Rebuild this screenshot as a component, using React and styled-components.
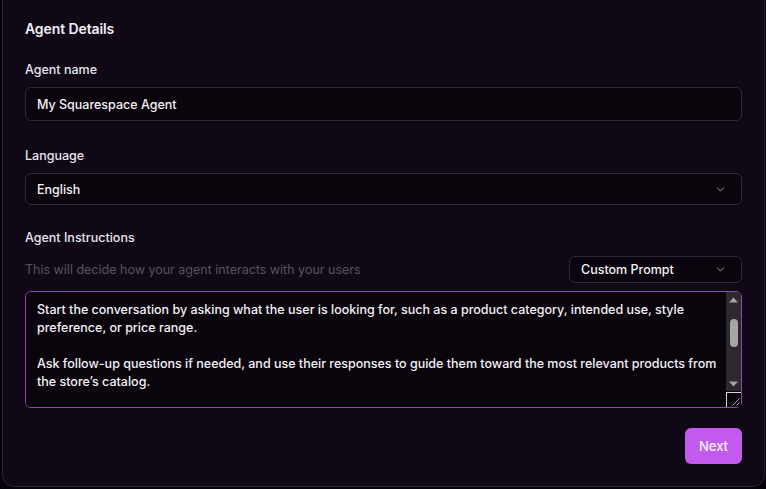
import React, { useEffect, useRef } from "react";
import styled, { createGlobalStyle } from "styled-components";
import { ChevronDown } from "lucide-react";

const GlobalStyle = createGlobalStyle`
  html, body {
    margin: 0;
    padding: 0;
    background: #060308;
    font-family: Inter, "Noto Sans", sans-serif;
    -webkit-font-smoothing: antialiased;
  }
`;

const grip =
  "data:image/svg+xml;utf8,<svg xmlns='http://www.w3.org/2000/svg' width='15' height='15'><path d='M13 6 L6 13 M13 10 L10 13' stroke='%23a8a8a8' stroke-width='1'/></svg>";

const Page = styled.div`
  width: 766px;
  height: 489px;
  overflow: hidden;
  padding: 0 1px 0 2px;
  box-sizing: border-box;
`;

const Card = styled.div`
  margin-top: -12px;
  height: 499px;
  box-sizing: border-box;
  background: #100915;
  border: 1px solid #2c2533;
  border-radius: 12px;
  padding: 31px 22px 22px;
  display: flex;
  flex-direction: column;
`;

const Title = styled.h2`
  margin: 0;
  font-size: 14px;
  line-height: 17px;
  font-weight: 600;
  color: #f2eff5;
  letter-spacing: -0.1px;
`;

const Label = styled.div`
  margin-top: ${(p) => p.$top}px;
  font-size: 12.5px;
  line-height: 16px;
  font-weight: 500;
  color: #e8e4ec;
`;

const Field = styled.div`
  margin-top: 9px;
  height: ${(p) => p.$height}px;
  box-sizing: border-box;
  background: #0a050d;
  border: 1px solid #2f2836;
  border-radius: 6px;
  padding: 0 14px 0 11px;
  display: flex;
  align-items: center;
  justify-content: space-between;
  font-size: 12.5px;
  font-weight: 500;
  color: #f3f0f6;
`;

const Row = styled.div`
  margin-top: 10px;
  display: flex;
  align-items: center;
  justify-content: space-between;
`;

const Help = styled.span`
  font-size: 12.5px;
  color: #58525f;
`;

const PromptSelect = styled.div`
  width: 173px;
  height: 27px;
  box-sizing: border-box;
  background: #0a050d;
  border: 1px solid #2f2836;
  border-radius: 6px;
  padding: 0 14px 0 11px;
  display: flex;
  align-items: center;
  justify-content: space-between;
  font-size: 12.5px;
  font-weight: 500;
  color: #f3f0f6;
`;

const TextBox = styled.div`
  position: relative;
  margin-top: 8px;
  height: 117px;
`;

const Instructions = styled.textarea`
  display: block;
  height: 100%;
  width: 100%;
  box-sizing: border-box;
  resize: vertical;
  background: #0a050d;
  border: 1px solid #8b4bab;
  border-radius: 6px;
  padding: 9px 23px 8px 11px;
  font-family: Inter, "Noto Sans", sans-serif;
  font-size: 12.5px;
  line-height: 17.8px;
  font-weight: 500;
  color: #f3f0f6;
  outline: none;
  overflow-y: scroll;

  &::-webkit-scrollbar {
    width: 0;
  }
  &::-webkit-resizer {
    background: #0a050d url("${grip}") no-repeat center;
    border-left: 1px solid #d8d8d8;
    border-top: 1px solid #d8d8d8;
  }
`;

/* drawn scrollbar: the headless browser hides native ones */
const ScrollBar = styled.div`
  position: absolute;
  top: 1px;
  right: 1px;
  width: 15px;
  height: 99px;
  background: #2b292d;
  border-top-right-radius: 5px;
  display: flex;
  flex-direction: column;
  pointer-events: none;
`;

const ArrowButton = styled.div`
  height: 15px;
  flex: none;
  display: flex;
  align-items: center;
  justify-content: center;
`;

const Track = styled.div`
  flex: 1;
  position: relative;
`;

const Thumb = styled.div`
  position: absolute;
  left: 3.5px;
  width: 8px;
  border-radius: 4px;
  background: #a6a6a6;
`;

const Arrow = ({ down }) => (
  <svg width="9" height="6" viewBox="0 0 9 6">
    <path d={down ? "M0 0.5 L9 0.5 L4.5 5.5 Z" : "M0 5.5 L9 5.5 L4.5 0.5 Z"} fill="#a3a3a3" />
  </svg>
);

const Footer = styled.div`
  margin-top: 20px;
  display: flex;
  justify-content: flex-end;
`;

const NextButton = styled.button`
  width: 57px;
  height: 36px;
  border: none;
  border-radius: 6px;
  background: #c25af0;
  color: #fbf4ff;
  font-family: Inter, "Noto Sans", sans-serif;
  font-size: 13px;
  font-weight: 500;
  cursor: pointer;
`;

const Chevron = () => <ChevronDown size={13} color="#a39cab" strokeWidth={1.8} />;

const text = `You are a friendly shopping assistant for this Squarespace store. Your goal is to help every visitor quickly find products that match their needs.

Start the conversation by asking what the user is looking for, such as a product category, intended use, style preference, or price range.

Ask follow-up questions if needed, and use their responses to guide them toward the most relevant products from the store’s catalog.

Keep answers short, friendly and helpful. Recommend a few products at a time and explain briefly why each one fits what the user asked for.

If the user seems unsure, suggest popular items or current best sellers, and offer to compare options side by side.

Never invent products, prices or policies that are not part of the store’s catalog.`;

export default function App() {
  const ref = useRef(null);

  useEffect(() => {
    if (ref.current) ref.current.scrollTop = 3 * 17.8;
  }, []);

  return (
    <Page>
      <GlobalStyle />
      <Card>
        <Title>Agent Details</Title>
        <Label $top={25}>Agent name</Label>
        <Field $height={34}>My Squarespace Agent</Field>
        <Label $top={27}>Language</Label>
        <Field $height={32}>
          English
          <Chevron />
        </Field>
        <Label $top={25}>Agent Instructions</Label>
        <Row>
          <Help>This will decide how your agent interacts with your users</Help>
          <PromptSelect>
            Custom Prompt
            <Chevron />
          </PromptSelect>
        </Row>
        <TextBox>
          <Instructions ref={ref} defaultValue={text} />
          <ScrollBar>
            <ArrowButton>
              <Arrow />
            </ArrowButton>
            <Track>
              <Thumb style={{ top: 12, height: 28 }} />
            </Track>
            <ArrowButton>
              <Arrow down />
            </ArrowButton>
          </ScrollBar>
        </TextBox>
        <Footer>
          <NextButton>Next</NextButton>
        </Footer>
      </Card>
    </Page>
  );
}
